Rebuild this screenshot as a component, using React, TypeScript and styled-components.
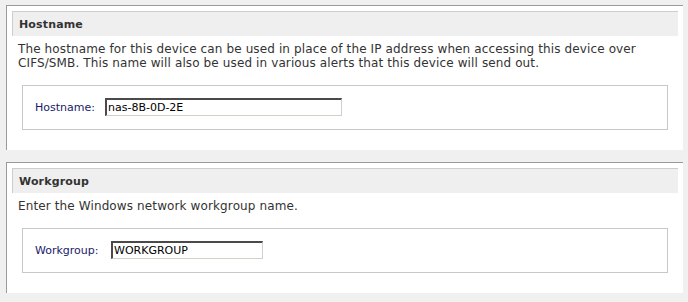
import React from 'react';
import styled, {createGlobalStyle} from 'styled-components';

const GlobalStyle = createGlobalStyle`
body {
  margin: 0;
  background: #f0f0f0;
  font-family: 'DejaVu Sans', Verdana, sans-serif;
  font-size: 11px;
}
`

type FieldProps = {
    title: string;
    description: React.ReactNode;
    label: string;
    value: string;
    inputWidth: number;
    labelWidth: number;
};

const SettingPanel: React.FC<FieldProps> = ({title, description, label, value, inputWidth, labelWidth}) => (
    <Panel>
        <Header>{title}</Header>
        <Description>{description}</Description>
        <FieldBox>
            <Label $width={labelWidth}>{label}</Label>
            <TextInput $width={inputWidth} defaultValue={value}/>
        </FieldBox>
    </Panel>
);

const App: React.FC = () => {
    return (
        <Page>
            <GlobalStyle/>
            <SettingPanel
                title="Hostname"
                description={<>The hostname for this device can be used in place of the IP address when accessing this device over<br/>CIFS/SMB. This name will also be used in various alerts that this device will send out.</>}
                label="Hostname:"
                value="nas-8B-0D-2E"
                labelWidth={70}
                inputWidth={237}
            />
            <SettingPanel
                title="Workgroup"
                description="Enter the Windows network workgroup name."
                label="Workgroup:"
                value="WORKGROUP"
                labelWidth={76}
                inputWidth={152}
            />
        </Page>
    );
};

export default App;

const Page = styled.div`
display: flex;
flex-direction: column;
gap: 12px;
padding: 5px 5px 0 6px;
`

const Panel = styled.div`
background: #fff;
border-top: 1px solid #9a9a9a;
border-left: 1px solid #9a9a9a;
padding: 5px 5px 20px 5px;
`

const Header = styled.div`
height: 24px;
line-height: 25px;
background: #efefef;
border-top: 1px solid #cdcdcd;
border-left: 1px solid #cdcdcd;
padding-left: 6px;
font-weight: bold;
letter-spacing: 0.15px;
color: #333;
`

const Description = styled.div`
padding: 6px 0 0 6px;
font-size: 12px;
letter-spacing: 0.12px;
line-height: 14px;
color: #333;
`

const FieldBox = styled.div`
display: flex;
align-items: center;
margin: 15px 10px 0 10px;
border: 1px solid #c8c8c8;
padding: 12px 12px 13px 12px;
`

const Label = styled.span<{$width: number}>`
width: ${({$width}) => $width}px;
color: #1a1a6a;
`

const TextInput = styled.input<{$width: number}>`
box-sizing: border-box;
width: ${({$width}) => $width}px;
height: 18px;
padding: 0 1px;
margin: 0;
font-family: 'DejaVu Sans', Verdana, sans-serif;
font-size: 11px;
color: #000;
background: #fff;
border-top: 2px solid #4a4a4a;
border-left: 2px solid #4a4a4a;
border-right: 1px solid #d4d0c8;
border-bottom: 1px solid #d4d0c8;
outline: none;
`
